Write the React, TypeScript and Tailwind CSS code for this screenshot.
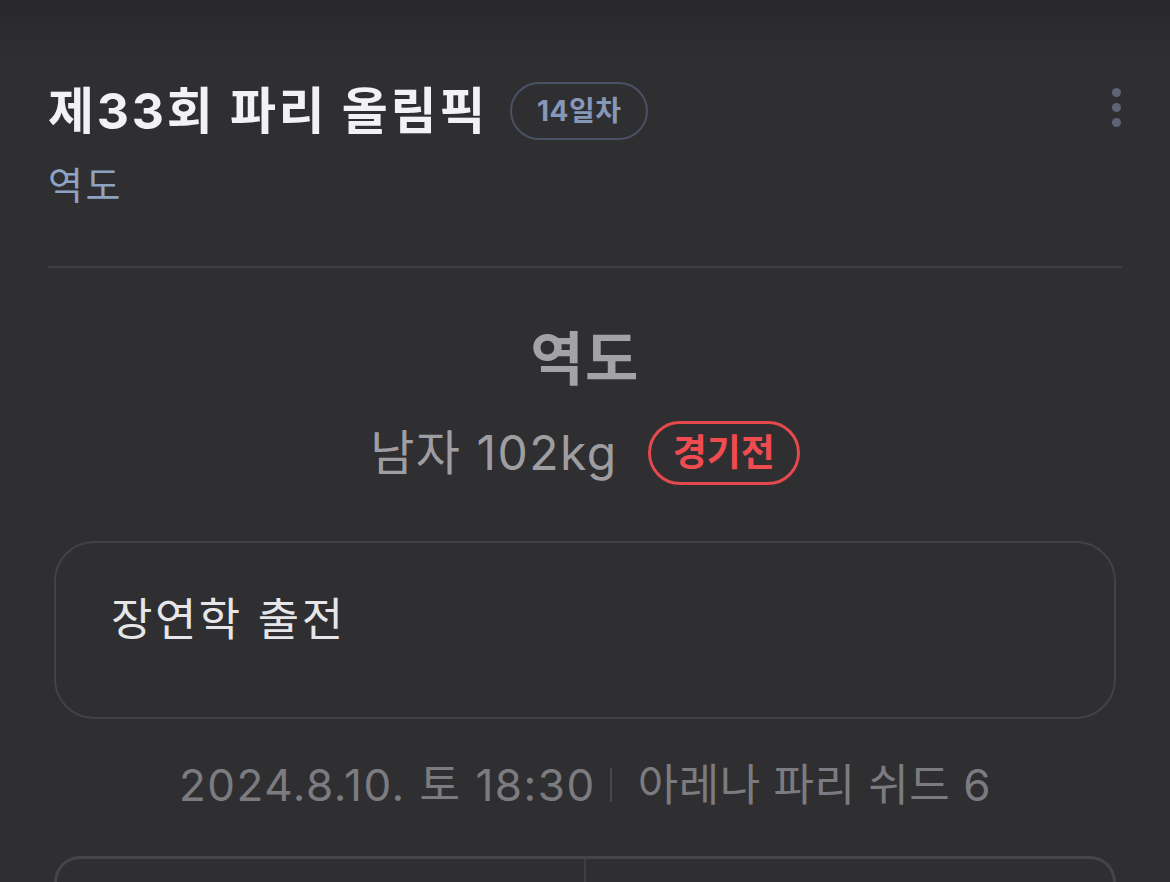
import React from 'react';

const FONT = "font-['Inter','Noto_Sans_CJK_KR',sans-serif]";

export default function App() {
  return (
    <div className={`w-full h-[882px] overflow-hidden bg-[#2f2f32] ${FONT}`}>
      <div className="bg-gradient-to-b from-[#28282b] to-[#2f2f32] h-[60px] -mb-[60px]" />
      <div className="relative px-[48px] pt-[82px]">
        {/* header */}
        <div className="flex items-center justify-between h-[58px]">
          <div className="flex items-center">
            <h1 className="text-[50px] leading-[58px] font-bold text-[#f2f2f4] tracking-[2.7px]">제33회 파리 올림픽</h1>
            <span className="ml-[22px] h-[58px] px-[25px] flex items-center rounded-full border-2 border-[#4a5163] text-[28px] font-bold tracking-[0.5px] text-[#8797b8]">
              14일차
            </span>
          </div>
          <div className="flex flex-col gap-[6px] mr-[1px] mb-[8px]">
            <span className="w-[9px] h-[9px] rounded-full bg-[#5e6476]" />
            <span className="w-[9px] h-[9px] rounded-full bg-[#5e6476]" />
            <span className="w-[9px] h-[9px] rounded-full bg-[#5e6476]" />
          </div>
        </div>
        <div className="mt-[23px] text-[38px] leading-[44px] tracking-[2.5px] text-[#8ea2c2]">역도</div>
        <div className="mt-[59px] h-[2px] bg-[#3c3e45]" />
      </div>

      {/* match info */}
      <div className="flex flex-col items-center">
        <div className="mt-[59px] text-[58px] leading-[64px] font-bold tracking-[1.5px] text-[#a3a3a7]">역도</div>
        <div className="mt-[30px] h-[64px] flex items-center gap-[30px]">
          <span className="text-[48px] leading-[64px] tracking-[1.5px] text-[#9e9ea2]">남자 102kg</span>
          <span className="h-[64px] px-[22px] flex items-center rounded-full border-[3px] border-[#e5484d] text-[37px] font-bold text-[#ef4b51]">
            경기전
          </span>
        </div>
      </div>

      <div className="mx-[54px] mt-[56px] h-[178px] rounded-[40px] border-2 border-[#434347] pl-[55px] pt-[52px]">
        <div className="text-[45px] leading-[50px] tracking-[2.5px] text-[#e6e6e8]">장연학 출전</div>
      </div>

      <div className="mt-[40px] flex items-center justify-center text-[44px] leading-[52px] text-[#7c7c80]">
        <span className="tracking-[1.5px]">2024.8.10. 토 18:30</span>
        <span className="ml-[14px] mr-[26px] w-[2px] h-[34px] bg-[#48484c]" />
        <span className="tracking-[0.5px]">아레나 파리 쉬드 6</span>
      </div>

      <div className="mx-[54px] mt-[45px] h-[120px] rounded-t-[26px] border-[3px] border-b-0 border-[#444449] flex">
        <div className="flex-1 border-r-2 border-[#3f3f44]" />
        <div className="flex-1" />
      </div>
    </div>
  );
}
